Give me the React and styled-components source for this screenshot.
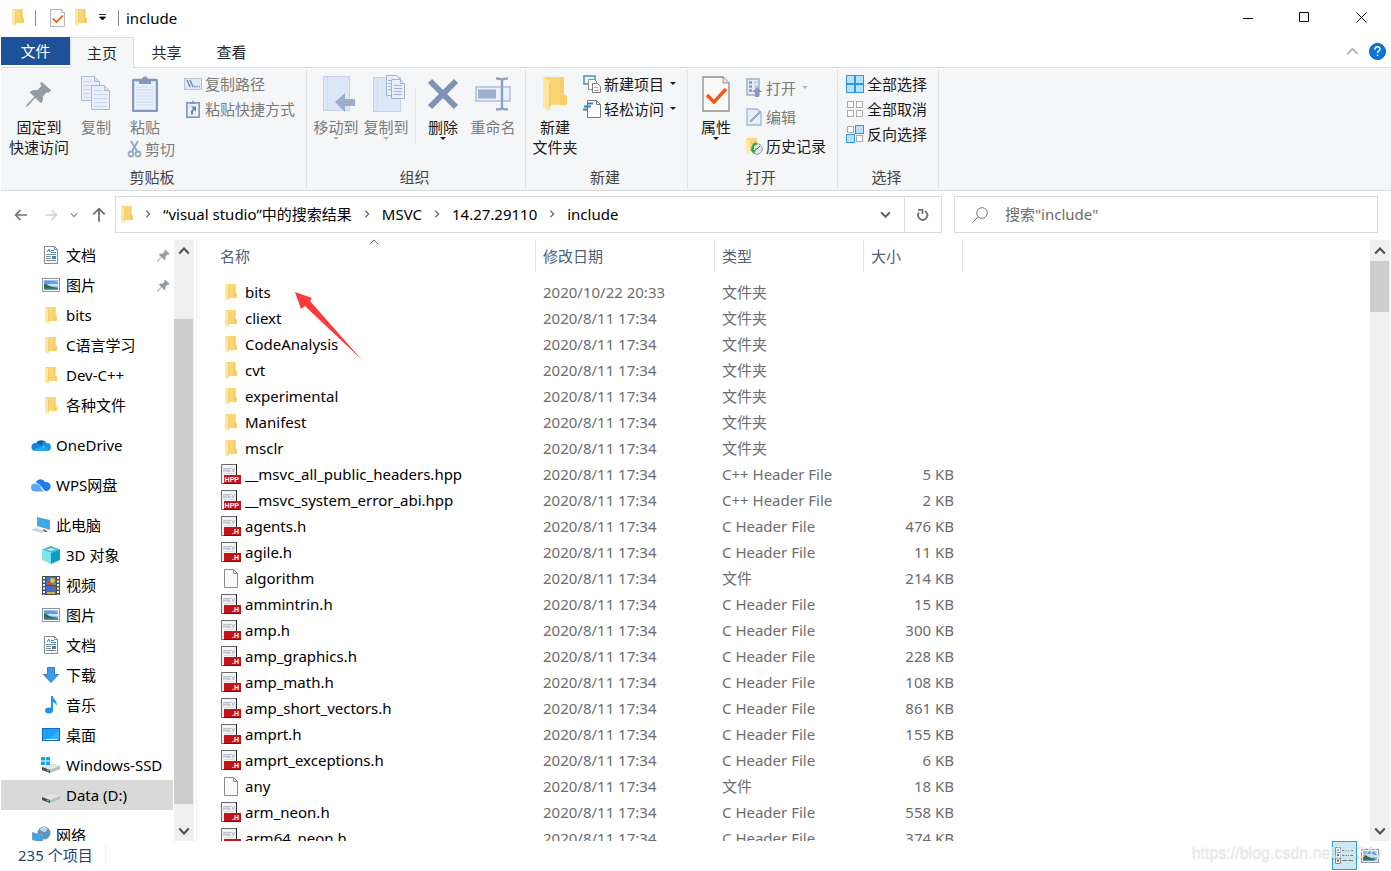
import React from "react";
import styled, { createGlobalStyle } from "styled-components";

const GlobalStyle = createGlobalStyle`
  * {
    box-sizing: border-box;
  }
  body {
    margin: 0;
    background: #fff;
    overflow: hidden;
  }
  body, button, input {
    font-family: "Noto Sans", "Noto Sans CJK SC", sans-serif;
    font-size: 15px;
    line-height: 20px;
    color: #000;
  }
  button {
    padding: 0;
    border: 0;
    background: none;
    white-space: nowrap;
  }
  ul {
    margin: 0;
    padding: 0;
    list-style: none;
  }
  svg {
    display: block;
    flex: none;
  }
`;

const Window = styled.div`
  position: relative;
  display: flex;
  flex-direction: column;
  height: 100vh;
  padding-left: 1px;
`;

const TitleBar = styled.header`
  display: flex;
  align-items: center;
  height: 37px;
  padding: 0 1px 2px 9px;
`;

const QuickAccess = styled.div`
  display: flex;
  align-items: center;
  flex: 1;
`;

const QuickButton = styled.button`
  display: flex;
  align-items: center;
  justify-content: center;
  width: ${props => props.$width}px;
  height: 24px;
`;

const TitleDivider = styled.span`
  width: 1px;
  height: 16px;
  background: #8b8b8b;
`;

const Title = styled.h1`
  margin: 0 0 0 1px;
  font-size: 15px;
  font-weight: 400;
`;

const WindowButton = styled.button`
  display: flex;
  align-items: center;
  justify-content: center;
  width: 57px;
  height: 35px;
`;

const TabBar = styled.nav`
  display: flex;
  height: 31px;
  border-bottom: 1px solid #dadbdc;
`;

const Tab = styled.button`
  width: 65px;
  height: 30px;
  color: #262626;
`;

const FileTab = styled(Tab)`
  width: 69px;
  height: 28px;
  background: #1e5199;
  color: #fff;
`;

const ActiveTab = styled(Tab)`
  height: 31px;
  width: 64px;
  border: 1px solid #dadbdc;
  border-bottom: 0;
  background: #f5f6f7;
`;

const TabTools = styled.div`
  display: flex;
  align-items: center;
  gap: 10px;
  margin-left: auto;
  padding: 0 5px 2px 0;
`;

const Ribbon = styled.section`
  display: flex;
  height: 123px;
  border-bottom: 1px solid #dadbdc;
  background: #f5f6f7;
`;

const Group = styled.div`
  display: flex;
  flex-direction: column;
  width: ${props => props.$width}px;
  margin: 2px 0;
  border-right: 1px solid #e1e2e3;
`;

const GroupBody = styled.div`
  display: flex;
  flex: 1;
  padding-left: ${props => props.$indent || 0}px;
`;

const GroupTitle = styled.div`
  height: 21px;
  padding-right: 3px;
  text-align: center;
  color: #444;
`;

const Stack = styled.div`
  display: flex;
  flex-direction: column;
  padding: ${props => props.$pad || "1px 0 0 0"};
`;

const BigButton = styled.button`
  display: flex;
  flex-direction: column;
  align-items: center;
  width: ${props => props.$width}px;
  color: ${props => (props.disabled ? "#7a7a7a" : "#1a1a1a")};
`;

const BigIcon = styled.span`
  display: flex;
  align-items: center;
  height: 47px;
`;

const SmallButton = styled.button`
  display: flex;
  align-items: center;
  gap: 3px;
  height: ${props => props.$height || 25}px;
  color: ${props => (props.disabled ? "#7a7a7a" : "#1a1a1a")};
`;

const CutButton = styled(SmallButton)`
  height: 20px;
  margin: 2px 0 0 8px;
`;

const Caret = styled.span`
  width: 0;
  height: 0;
  margin-left: ${props => (props.$side ? 3 : 0)}px;
  border: 3px solid transparent;
  border-top-color: ${props => (props.$muted ? "#b5b5b5" : "#1a1a1a")};
  border-bottom: 0;
`;

const InnerDivider = styled.span`
  width: 1px;
  height: 55px;
  margin: 19px 0 0 4px;
  background: #e1e2e3;
`;

const AddressRow = styled.div`
  display: flex;
  align-items: center;
  height: 49px;
  padding: 0 13px 2px 0;
`;

const NavButtons = styled.div`
  display: flex;
  align-items: center;
  width: 114px;
  padding-left: 10px;
`;

const NavButton = styled.button`
  display: flex;
  justify-content: center;
  width: ${props => props.$width}px;

  &:last-child {
    margin-left: auto;
  }
`;

const AddressBox = styled.div`
  display: flex;
  align-items: center;
  flex: 1;
  height: 37px;
  margin-right: 12px;
  padding-left: 5px;
  border: 1px solid #d9d9d9;
`;

const Crumbs = styled.ol`
  display: flex;
  flex: 1;
  margin: 0;
  padding: 0 0 2px;
  list-style: none;
`;

const Crumb = styled.li`
  display: flex;
  align-items: center;
`;

const CrumbArrow = styled.span`
  display: flex;
  justify-content: center;
  width: 30px;
`;

const BoxButton = styled.button`
  display: flex;
  align-items: center;
  justify-content: center;
  width: 37px;
  height: 35px;
  border-left: ${props => (props.$line ? "1px solid #d9d9d9" : "0")};
`;

const SearchBox = styled.label`
  display: flex;
  align-items: center;
  flex: 0 1 424px;
  height: 37px;
  padding-left: 17px;
  gap: 17px;
  border: 1px solid #d9d9d9;
`;

const SearchInput = styled.input`
  flex: 1;
  min-width: 0;
  padding: 0 0 2px;
  border: 0;
  outline: 0;
  background: none;
  &::placeholder {
    color: #6d6d6d;
    opacity: 1;
  }
`;

const Body = styled.div`
  display: flex;
  flex: 1;
  min-height: 0;
  padding-right: 1px;
`;

const Sidebar = styled.ul`
  width: 173px;
  overflow: hidden;
`;

const SideItem = styled.li`
  margin-top: ${props => (props.$gap ? 10 : 0)}px;
`;

const SideLink = styled.button`
  display: flex;
  align-items: center;
  width: 172px;
  height: 30px;
  padding-left: ${props => (props.$root ? 29 : 39)}px;
  padding-right: 3px;
  gap: 4px;
  background: ${props => (props.$selected ? "#d9d9d9" : "none")};
`;

const SideIcon = styled.span`
  display: flex;
  justify-content: center;
  width: 22px;
`;

const SideName = styled.span`
  flex: 1;
  text-align: left;
`;

const ScrollBar = styled.div`
  display: flex;
  flex-direction: column;
  flex: none;
  width: 20px;
  padding-right: 1px;
  background: #f0f0f0;
`;

const ScrollArrow = styled.button`
  display: flex;
  align-items: center;
  justify-content: center;
  height: 21px;
`;

const ScrollTrack = styled.div`
  display: flex;
  flex-direction: column;
  flex: 1;
`;

const Space = styled.div`
  flex: ${props => props.$grow} 1 0;
`;

const Thumb = styled(Space)`
  background: #cdcdcd;
`;

const Content = styled.main`
  flex: 1;
  min-width: 0;
  margin-left: 2px;
  padding-left: 16px;
  border-left: 1px solid #f0f0f0;
  overflow: hidden;
`;

const FileTable = styled.table`
  width: 750px;
  table-layout: fixed;
  border-collapse: separate;
  border-spacing: 0;

  tbody::before {
    display: table-row;
    height: 7px;
    content: "";
  }
`;

const HeadCell = styled.th`
  position: relative;
  width: ${props => props.$width}px;
  height: 32px;
  padding: 0 0 0 7px;
  border-right: 1px solid #e5e5e5;
  font-weight: 400;
  text-align: left;
  color: #4c607a;
`;

const SortMark = styled.span`
  position: absolute;
  top: -3px;
  left: 50%;
  margin-left: -5px;
`;

const Cell = styled.td`
  height: 26px;
  padding: 0 9px 0 7px;
  text-align: ${props => (props.$right ? "right" : "left")};
  white-space: nowrap;
  color: #6d6d6d;
`;

const NameCell = styled(Cell)`
  padding-left: 8px;
  color: #000;
`;

const FileName = styled.span`
  display: flex;
  align-items: center;
  gap: 4px;
`;

const FileIcon = styled.span`
  display: flex;
  justify-content: center;
  width: 20px;
`;

const StatusBar = styled.footer`
  display: flex;
  align-items: flex-start;
  height: 30px;
  padding-right: 9px;
`;

const StatusText = styled.div`
  flex: 1;
  padding: 4px 0 0 17px;
  color: #26456e;
`;

const StatusCount = styled.span`
  padding-right: 12px;
  border-right: 1px solid #f0f0f0;
`;

const ViewButton = styled.button`
  display: flex;
  align-items: center;
  justify-content: center;
  width: 25px;
  height: 29px;
  border: 1px solid ${props => (props.$active ? "#26a0da" : "transparent")};
  background: ${props => (props.$active ? "#cbe8f6" : "none")};
`;

const Watermark = styled.div`
  position: absolute;
  right: 9px;
  bottom: 8px;
  font-family: "Liberation Sans", sans-serif;
  font-size: 16px;
  color: rgba(236, 236, 236, 0.85);
  text-shadow: 0 1px 1px rgba(0, 0, 0, 0.12);
  pointer-events: none;
`;

const Pointer = styled.svg`
  position: absolute;
  top: 291px;
  left: 294px;
  pointer-events: none;
`;

/* icons */

const FolderIcon = ({ width = 12, height = 17 }) => (
  <svg width={width} height={height} viewBox="0 0 24 34" preserveAspectRatio="none">
    <path d="M1 0h20v18l3 1v9H1z" fill="#fbd677" />
    <path d="M17 0h4v18l3 1v9h-7z" fill="#f7cd69" />
    <path d="M0 0l8 5v22l-2 7-6-4z" fill="#ffe79f" />
    <path d="M8 5v22l-2 7V6z" fill="#f4cb66" />
  </svg>
);

const PropertiesIcon = ({ width = 15, height = 18 }) => (
  <svg width={width} height={height} viewBox="0 0 28 36" preserveAspectRatio="none">
    <path d="M1 1h20l6 6v28H1z" fill="#fafafa" stroke="#8f8f8f" strokeWidth="1.3" />
    <path d="M21 1v6h6" fill="#e6e6e6" stroke="#8f8f8f" />
    <path d="M5 19l7 7 12-13" fill="none" stroke="#f1591b" strokeWidth="3.4" />
  </svg>
);

const PinIcon = ({ size = 26 }) => (
  <svg width={size} height={size} viewBox="0 0 28 28" fill="#929ca5">
    <path d="M17 1l10 9-3 3-2-1-4 5c1 3 0 5-2 7l-6-6-8 9-2 1 1-3 8-8-5-5c2-2 5-3 8-2l5-5-2-2z" />
  </svg>
);

const Sheet = ({ x, y }) => (
  <g transform={`translate(${x} ${y})`}>
    <path d="M.5.5h13l5 5v19H.5z" fill="#e9effa" stroke="#a9bbdb" />
    <path d="M13.500.5v5h5" fill="#d3dff2" stroke="#a9bbdb" />
    <path d="M3 5.500h8M3 9.500h13M3 13.500h13M3 17.500h13M3 21.500h13" stroke="#c9d6ec" />
  </g>
);

const CopyIcon = () => (
  <svg width="30" height="35" viewBox="0 0 30 35">
    <Sheet x={0} y={0} />
    <Sheet x={10} y={9} />
  </svg>
);

const PasteIcon = () => (
  <svg width="26" height="36" viewBox="0 0 26 36">
    <rect x="1" y="4" width="24" height="31" rx="1" fill="#e9f0fb" stroke="#8497bd" strokeWidth="2.400" />
    <path d="M7 8V4h3a3 3.500 0 016 0h3v4z" fill="#8497bd" />
    <path d="M4 11h18M4 14h18M4 17h18M4 20h18M4 23h18M4 26h18M4 29h18" stroke="#d1dcee" />
  </svg>
);

const PathIcon = () => (
  <svg width="18" height="12" viewBox="0 0 18 12">
    <rect x=".5" y=".5" width="17" height="11" fill="#dfe8f5" stroke="#b5c4dd" />
    <path d="M3 2l3 7M6 2l3 7" stroke="#7388b3" strokeWidth="1.400" />
    <path d="M10 8.500h1.500M12.500 8.500H14M15 8.500h1" stroke="#7388b3" strokeWidth="1.500" />
  </svg>
);

const ShortcutIcon = () => (
  <svg width="18" height="18" viewBox="0 0 18 18">
    <rect x="2.800" y="2.800" width="12.400" height="14.400" fill="#e9f0fb" stroke="#8497bd" strokeWidth="1.600" />
    <path d="M6 4V2h2a1 1.200 0 012 0h2v2z" fill="#8497bd" />
    <path d="M7 6.500h5v5l-1.500-1.500-1.500 1.500v3H7V11l2-2.500z" fill="#6f86b5" />
  </svg>
);

const CutIcon = () => (
  <svg width="15" height="18" viewBox="0 0 15 18" fill="none" stroke="#97a8c7">
    <path d="M4 1l6 10M11 1L5 11" strokeWidth="2" />
    <circle cx="4" cy="14" r="2.500" strokeWidth="1.800" />
    <circle cx="11" cy="14" r="2.500" strokeWidth="1.800" />
  </svg>
);

const MoveIcon = () => (
  <svg width="37" height="36" viewBox="-5 0 37 36">
    <rect x=".5" y=".5" width="26" height="34" fill="#dbe6f6" stroke="#c3d1e9" />
    <path d="M4.500 1v33" stroke="#cfdbee" />
    <path d="M12 26l10-9v6h10v7H22v6z" fill="#9dadc9" />
  </svg>
);

const CopyToIcon = () => (
  <svg width="38" height="38" viewBox="-6 0 38 38">
    <rect x=".5" y="2.500" width="27" height="34" fill="#dbe6f6" stroke="#c3d1e9" />
    <path d="M4.500 3v33" stroke="#cfdbee" />
    <g fill="#eaf0fa" stroke="#9fb2d2">
      <path d="M13.500.5h10l4 4v16h-14z" />
      <path d="M18.500 4.500h9l4 4v15h-13z" />
      <path d="M27.500 4.500v4h4M21 10.500h8M21 13.500h8M21 16.500h8M21 19.500h8" />
      <path d="M15 5.500h3M15 8.500h3M15 11.500h3M15 14.500h3" />
    </g>
  </svg>
);

const DeleteIcon = () => (
  <svg width="32" height="32" viewBox="0 0 32 32">
    <path d="M3 3l26 26M29 3L3 29" stroke="#8093b5" strokeWidth="6" />
  </svg>
);

const RenameIcon = () => (
  <svg width="36" height="34" viewBox="0 0 36 34">
    <rect x="1" y="10" width="34" height="14" fill="#e9f1fc" stroke="#a9bbd9" strokeWidth="1.400" />
    <rect x="3" y="12.500" width="18" height="9" fill="#9fb1ce" />
    <path d="M21 1.500c4 0 6 0 6 3v25c0 3-2 3-6 3M33 1.500c-4 0-6 0-6 3v25c0 3 2 3 6 3" fill="none" stroke="#8fa2c3" strokeWidth="2.400" />
  </svg>
);

const NewItemIcon = () => (
  <svg width="18" height="18" viewBox="0 0 18 18">
    <rect x="1" y="1" width="11" height="8" fill="#e9f6fb" stroke="#4a9cbb" strokeWidth="1.600" />
    <path d="M5.500 4.500h6l2 2v8h-8z" fill="#fff" stroke="#8f8f8f" />
    <path d="M9.500 8.500h5l3 3v6h-8z" fill="#fff" stroke="#7d7d7d" />
    <path d="M11 12.500h4M11 15.500h5" stroke="#c9a8a8" />
  </svg>
);

const EasyAccessIcon = () => (
  <svg width="18" height="20" viewBox="0 0 18 20">
    <path d="M4.500 1.500h9l4 4v13h-13z" fill="#fdfdfd" stroke="#777" />
    <path d="M13.500 1.500v4h4" fill="none" stroke="#777" />
    <path d="M4 4.500h6M1 7.500h7M0 10.500h4" stroke="#3b7db8" strokeWidth="2" />
  </svg>
);

const OpenIcon = () => (
  <svg width="17" height="20" viewBox="0 0 17 20">
    <rect x="1" y="1" width="12" height="16" fill="#e6edf8" stroke="#a4b3cf" strokeWidth="1.600" />
    <path d="M3 4.500h3M3 8.500h3M3 12.500h3" stroke="#8497bd" strokeWidth="2.400" />
    <path d="M8 4.500h4M8 8.500h4" stroke="#c3cfe4" strokeWidth="2" />
    <path d="M11 9l5 5h-3v5H9v-5H6z" fill="#8497bd" />
  </svg>
);

const EditIcon = () => (
  <svg width="17" height="18" viewBox="0 0 17 18">
    <path d="M1 1h10l4 4v12H1z" fill="#e6eefa" stroke="#a9b8d3" strokeWidth="1.400" />
    <path d="M4 14l2-1 9-9-1-1-9 9z" fill="#9aabca" stroke="#9aabca" />
  </svg>
);

const HistoryIcon = () => (
  <svg width="17" height="18" viewBox="0 0 17 18">
    <path d="M1 1h10v12H1z" fill="#fbd677" />
    <path d="M0 1l4 3v10l-1 3-3-2z" fill="#ffe9a8" />
    <circle cx="11" cy="12" r="5.300" fill="#e4e4e4" stroke="#999" />
    <path d="M11 12l3-3M11 12H9" stroke="#666" />
    <path d="M11 6.500c-4 0-5 4-4 7" fill="none" stroke="#2fae4b" strokeWidth="2.400" />
    <path d="M4 13h6l-2 4z" fill="#2fae4b" />
  </svg>
);

const TILES = [[0, 0], [9, 0], [0, 9], [9, 9]];

const TilesIcon = ({ kind }) => (
  <svg width="18" height="18" viewBox="0 0 18 18">
    {TILES.map(([x, y], index) => {
      const on = kind === "all" || (kind === "invert" && (index === 1 || index === 2));
      return on ? (
        <rect key={index} x={x + 0.5} y={y + 0.5} width="8" height="8" fill="#b5e2fb" stroke="#2f95de" />
      ) : (
        <rect key={index} x={x + 1.5} y={y + 1.5} width="6" height="6" fill="#fdfdfd" stroke="#a9a9a9" />
      );
    })}
  </svg>
);

const Chevron = ({ dir = "down", size = 8, color = "#666", weight = 1.6 }) => {
  const turn = { down: 0, left: 90, up: 180, right: 270 }[dir];
  return (
    <svg width={size} height={size} viewBox="0 0 10 10">
      <path d="M1 3l4 4 4-4" transform={`rotate(${turn} 5 5)`} fill="none" stroke={color} strokeWidth={weight} />
    </svg>
  );
};

const Arrow = ({ turn = 0, color = "#707070", size = 14 }) => (
  <svg width={size} height={size} viewBox="0 0 14 14">
    <path d="M13 7H1.500M6.500 2l-5 5 5 5" transform={`rotate(${turn} 7 7)`} fill="none" stroke={color} strokeWidth="1.600" />
  </svg>
);

const RefreshIcon = () => (
  <svg width="12" height="13" viewBox="0 0 12 13" fill="none" stroke="#6f6f6f">
    <path d="M2 4.500a4.600 4.600 0 107.500 0L8 3" strokeWidth="1.800" />
    <path d="M1 1.800h4.500v4.200" strokeWidth="1.700" />
  </svg>
);

const SearchIcon = () => (
  <svg width="16" height="16" viewBox="0 0 16 16" fill="none" stroke="#777">
    <circle cx="10" cy="6" r="5.300" />
    <path d="M6.200 9.800L.5 15.500" />
  </svg>
);

const DocumentIcon = () => (
  <svg width="16" height="18" viewBox="0 0 16 18">
    <path d="M1.500.5h10l3 3v14h-13z" fill="#fff" stroke="#858b8f" />
    <path d="M11.500.5v3h3" fill="none" stroke="#858b8f" />
    <path d="M4 6l2-3 1 3M8 4.500h3M8 6.500h5" stroke="#2a8ad4" fill="none" />
    <path d="M3 8.500h10M3 10.500h5M3 12.500h5M3 14.500h10" stroke="#7c8c9a" />
    <rect x="9" y="10" width="4" height="3" fill="#3f87b5" />
  </svg>
);

const PictureIcon = () => (
  <svg width="18" height="14" viewBox="0 0 18 14">
    <rect x=".5" y=".5" width="17" height="13" fill="#fff" stroke="#939393" />
    <rect x="2" y="2" width="14" height="10" fill="#8cbdf0" />
    <path d="M2 3h9l5 2v2H2z" fill="#5c9ce6" />
    <path d="M4 7c4-2 8-1 12-1v2H4z" fill="#cfe6f8" />
    <path d="M2 6c3 0 5 2 8 3l6 1v1H2z" fill="#2d6a58" />
    <path d="M2 10.500h14V12H2z" fill="#548fb2" />
  </svg>
);

const OneDriveIcon = () => (
  <svg width="20" height="14" viewBox="0 0 20 14">
    <path d="M5 5a6 5 0 0110-1l-4 5-7-2z" fill="#0c62b5" />
    <path d="M4 13a4 4 0 011-8c3 0 5 2 7 4l-6 4z" fill="#1386d9" />
    <path d="M11 6c1-2 3-2 5-1a4 4 0 010 8z" fill="#1e94e5" />
    <path d="M2 12l9-4 7 4c-1 1-2 1-3 1H4z" fill="#2aa7ea" />
  </svg>
);

const WpsCloudIcon = () => (
  <svg width="20" height="14" viewBox="0 0 20 14">
    <path d="M5 4a5 5 0 019 0 4 4 0 012 9h-2L6 6z" fill="#1e7bf5" />
    <path d="M4 13.500a4 4 0 010-8c5 0 6 8 10 8z" fill="#5da6fb" />
    <path d="M5 5.500c5 0 6 6 9 8" fill="none" stroke="#fff" strokeWidth=".8" />
  </svg>
);

const ComputerIcon = () => (
  <svg width="20" height="18" viewBox="0 0 20 18">
    <path d="M6 1l13 3v10L6 10z" fill="#7d98ae" />
    <path d="M7 2.300l11 2.500v7.700L7 9.200z" fill="#39a9f0" />
    <path d="M0 14l5-2 10 3-4 2z" fill="#cfd5da" />
    <path d="M12 13l3 1 2 2h-4z" fill="#6b7781" />
  </svg>
);

const CubeIcon = () => (
  <svg width="20" height="18" viewBox="0 0 20 18">
    <path d="M10 0l9 3.500L10 7 1 3.500z" fill="#3fb6cb" />
    <path d="M1 3.500L10 7v11l-9-4z" fill="#7fe3ec" />
    <path d="M19 3.500L10 7v11l9-4z" fill="#0b9fc7" />
    <path d="M10 2l5 1.500L10 5 5 3.500z" fill="#b7eff4" />
  </svg>
);

const VideoIcon = () => (
  <svg width="18" height="19" viewBox="0 0 18 19">
    <rect width="18" height="19" fill="#4b4b4b" />
    <path d="M2 1v18M16 1v18" stroke="#fff" strokeWidth="2" strokeDasharray="2 1.500" />
    <path d="M4 1h10v8H4zM4 10h10v8H4z" fill="#3a6fd8" />
    <path d="M5 6h4v3H5zM11 10l2 2-2 2-2-2z" fill="#d9482d" />
    <circle cx="10.500" cy="4.500" r="2.400" fill="#e5c92f" />
    <path d="M5 16h8v2H5z" fill="#c7b93b" />
    <path d="M10 7h4v2h-4z" fill="#56a34a" />
  </svg>
);

const DownloadIcon = () => (
  <svg width="18" height="18" viewBox="0 0 18 18">
    <path d="M5.500 1.500h7v7h4L9 16.500 1.500 8.500h4z" fill="#3d9be9" stroke="#2f7fc6" />
  </svg>
);

const MusicIcon = () => (
  <svg width="14" height="18" viewBox="0 0 14 18" fill="#1b95f0">
    <ellipse cx="5" cy="14.500" rx="4" ry="3" />
    <path d="M7 0h2c0 4 5 4 3.500 10C12 7 10 6.500 9 6v9H7z" />
  </svg>
);

const DesktopIcon = () => (
  <svg width="18" height="14" viewBox="0 0 18 14">
    <rect x=".5" y=".5" width="17" height="12" fill="#1ba1fb" stroke="#0b6fbd" />
    <path d="M6 12L17 2v10z" fill="#3cb0ff" />
    <path d="M2 11.500h14" stroke="#e9f5ff" strokeDasharray="1 1 11 1" />
  </svg>
);

const DriveIcon = ({ system }) => (
  <svg width="20" height="18" viewBox="0 0 20 18">
    <path d="M1 11l11-3.500L19 10v3L9 17l-8-3z" fill="#b9bcbf" />
    <path d="M1 11l11-3.500L19 10l-10 4z" fill="#e2e4e5" />
    <path d="M1 11l8 3v3l-8-3z" fill="#4b4f50" />
    <path d="M6 14.500h2" stroke="#5fdc6a" strokeWidth="1.500" />
    {system && <path d="M0 1h4v3.500H0zM5 1h4v3.500H5zM0 5.500h4V9H0zM5 5.500h4V9H5z" fill="#12a4e6" />}
  </svg>
);

const NetworkIcon = () => (
  <svg width="20" height="18" viewBox="0 0 20 18">
    <circle cx="13" cy="7" r="6.500" fill="#5f94b8" />
    <path d="M9 3c3-3 6-2 8 0-2 1-2 4-4 3s-3-1-4-3z" fill="#b9dcec" />
    <path d="M1 6l11 3v8L1 14z" fill="#7c9cb5" />
    <path d="M2 7.300l9 2.500v5.900L2 13.200z" fill="#35a8f0" />
  </svg>
);

const HeaderIcon = ({ label }) => (
  <svg width="20" height="21" viewBox="0 0 20 21">
    <path d="M.5.5h15v19H.5z" fill="#f4f4f4" stroke="#6a6a6a" />
    <path d="M15.500 0v11" stroke="#222" />
    <text x="2" y="7.500" fontFamily="Liberation Sans, sans-serif" fontSize="6" fontWeight="700" fill="#b3b3b3">
      REV
    </text>
    <path d="M3 9.500h10" stroke="#dadada" />
    <rect x="3" y="11" width="17" height="8" fill="#c4141a" />
    <path d="M3 19.500h17" stroke="#701010" />
    <text x="18" y="18" textAnchor="end" fontFamily="Liberation Sans, sans-serif" fontSize="7" fontWeight="700" fill="#fff">
      {label}
    </text>
  </svg>
);

const BlankFileIcon = () => (
  <svg width="16" height="19" viewBox="0 0 16 19">
    <path d="M1.500.5h9l4 4v14h-13z" fill="#fafafa" stroke="#8a8a8a" />
    <path d="M10.500.5v4h4" fill="none" stroke="#8a8a8a" />
  </svg>
);

const DetailsViewIcon = () => (
  <svg width="19" height="17" viewBox="0 0 19 17">
    <path d="M.5.5h5v16h-5zM.5 5.500h5M.5 11h5" fill="#fff" stroke="#8c8c8c" />
    <path d="M2 3h2M2 8h2" stroke="#3c79b4" strokeWidth="2" />
    <path d="M2 13.500h2" stroke="#c8362c" strokeWidth="2" />
    <path d="M7 3.500h5M13 3.500h5M7 8.500h5M13 8.500h5M7 13.500h5M13 13.500h5" stroke="#777" />
  </svg>
);

const fileIcons = {
  folder: <FolderIcon />,
  hpp: <HeaderIcon label="HPP" />,
  h: <HeaderIcon label=".H" />,
  file: <BlankFileIcon />
};

const typeNames = {
  folder: "文件夹",
  hpp: "C++ Header File",
  h: "C Header File",
  file: "文件"
};

const sideItems = [
  { name: "文档", icon: <DocumentIcon />, pinned: true },
  { name: "图片", icon: <PictureIcon />, pinned: true },
  { name: "bits", icon: <FolderIcon /> },
  { name: "C语言学习", icon: <FolderIcon /> },
  { name: "Dev-C++", icon: <FolderIcon /> },
  { name: "各种文件", icon: <FolderIcon /> },
  { name: "OneDrive", icon: <OneDriveIcon />, root: true },
  { name: "WPS网盘", icon: <WpsCloudIcon />, root: true },
  { name: "此电脑", icon: <ComputerIcon />, root: true },
  { name: "3D 对象", icon: <CubeIcon /> },
  { name: "视频", icon: <VideoIcon /> },
  { name: "图片", icon: <PictureIcon /> },
  { name: "文档", icon: <DocumentIcon /> },
  { name: "下载", icon: <DownloadIcon /> },
  { name: "音乐", icon: <MusicIcon /> },
  { name: "桌面", icon: <DesktopIcon /> },
  { name: "Windows-SSD", icon: <DriveIcon system /> },
  { name: "Data (D:)", icon: <DriveIcon />, selected: true },
  { name: "网络", icon: <NetworkIcon />, root: true }
];

const files = [
  { name: "bits", kind: "folder", date: "2020/10/22 20:33" },
  { name: "cliext", kind: "folder" },
  { name: "CodeAnalysis", kind: "folder" },
  { name: "cvt", kind: "folder" },
  { name: "experimental", kind: "folder" },
  { name: "Manifest", kind: "folder" },
  { name: "msclr", kind: "folder" },
  { name: "__msvc_all_public_headers.hpp", kind: "hpp", size: 5 },
  { name: "__msvc_system_error_abi.hpp", kind: "hpp", size: 2 },
  { name: "agents.h", kind: "h", size: 476 },
  { name: "agile.h", kind: "h", size: 11 },
  { name: "algorithm", kind: "file", size: 214 },
  { name: "ammintrin.h", kind: "h", size: 15 },
  { name: "amp.h", kind: "h", size: 300 },
  { name: "amp_graphics.h", kind: "h", size: 228 },
  { name: "amp_math.h", kind: "h", size: 108 },
  { name: "amp_short_vectors.h", kind: "h", size: 861 },
  { name: "amprt.h", kind: "h", size: 155 },
  { name: "amprt_exceptions.h", kind: "h", size: 6 },
  { name: "any", kind: "file", size: 18 },
  { name: "arm_neon.h", kind: "h", size: 558 },
  { name: "arm64_neon.h", kind: "h", size: 374 }
];

const crumbs = ["“visual studio”中的搜索结果", "MSVC", "14.27.29110", "include"];

const RibbonButton = ({ icon, lines, width, disabled, menu }) => (
  <BigButton $width={width} disabled={disabled}>
    <BigIcon>{icon}</BigIcon>
    {lines.map(line => (
      <span key={line}>{line}</span>
    ))}
    {menu && <Caret $muted={disabled} />}
  </BigButton>
);

const RibbonItem = ({ icon, label, height, disabled, menu }) => (
  <SmallButton $height={height} disabled={disabled}>
    {icon}
    {label}
    {menu && <Caret $side $muted={disabled} />}
  </SmallButton>
);

const Scroll = ({ before, size, after }) => (
  <ScrollBar>
    <ScrollArrow aria-label="向上滚动">
      <Chevron dir="up" size={12} color="#505050" weight={1.8} />
    </ScrollArrow>
    <ScrollTrack>
      <Space $grow={before} />
      <Thumb $grow={size} />
      <Space $grow={after} />
    </ScrollTrack>
    <ScrollArrow aria-label="向下滚动">
      <Chevron size={12} color="#505050" weight={1.8} />
    </ScrollArrow>
  </ScrollBar>
);

const RibbonPanel = () => (
  <Ribbon>
    <Group $width={306}>
      <GroupBody $indent={4}>
        <RibbonButton icon={<PinIcon />} lines={["固定到", "快速访问"]} width={68} />
        <RibbonButton icon={<CopyIcon />} lines={["复制"]} width={46} disabled />
        <Stack $pad="0 5px 0 0">
          <RibbonButton icon={<PasteIcon />} lines={["粘贴"]} width={52} disabled />
          <CutButton disabled>
            <CutIcon />
            剪切
          </CutButton>
        </Stack>
        <Stack $pad="1px 0 0 4px">
          <RibbonItem icon={<PathIcon />} label="复制路径" disabled />
          <RibbonItem icon={<ShortcutIcon />} label="粘贴快捷方式" disabled />
        </Stack>
      </GroupBody>
      <GroupTitle>剪贴板</GroupTitle>
    </Group>
    <Group $width={219}>
      <GroupBody $indent={4}>
        <RibbonButton icon={<MoveIcon />} lines={["移动到"]} width={50} disabled menu />
        <RibbonButton icon={<CopyToIcon />} lines={["复制到"]} width={50} disabled menu />
        <InnerDivider />
        <RibbonButton icon={<DeleteIcon />} lines={["删除"]} width={54} menu />
        <RibbonButton icon={<RenameIcon />} lines={["重命名"]} width={46} disabled />
      </GroupBody>
      <GroupTitle>组织</GroupTitle>
    </Group>
    <Group $width={162}>
      <GroupBody $indent={1}>
        <RibbonButton icon={<FolderIcon width={24} height={34} />} lines={["新建", "文件夹"]} width={56} />
        <Stack>
          <RibbonItem icon={<NewItemIcon />} label="新建项目" menu />
          <RibbonItem icon={<EasyAccessIcon />} label="轻松访问" menu />
        </Stack>
      </GroupBody>
      <GroupTitle>新建</GroupTitle>
    </Group>
    <Group $width={150}>
      <GroupBody>
        <RibbonButton icon={<PropertiesIcon width={28} height={36} />} lines={["属性"]} width={56} menu />
        <Stack $pad="3px 0 0 2px">
          <RibbonItem icon={<OpenIcon />} label="打开" height={29} disabled menu />
          <RibbonItem icon={<EditIcon />} label="编辑" height={29} disabled />
          <RibbonItem icon={<HistoryIcon />} label="历史记录" height={29} />
        </Stack>
      </GroupBody>
      <GroupTitle>打开</GroupTitle>
    </Group>
    <Group $width={101}>
      <GroupBody $indent={8}>
        <Stack>
          <RibbonItem icon={<TilesIcon kind="all" />} label="全部选择" />
          <RibbonItem icon={<TilesIcon kind="none" />} label="全部取消" />
          <RibbonItem icon={<TilesIcon kind="invert" />} label="反向选择" />
        </Stack>
      </GroupBody>
      <GroupTitle>选择</GroupTitle>
    </Group>
  </Ribbon>
);

const App = () => (
  <Window>
    <GlobalStyle />
    <TitleBar>
      <QuickAccess>
        <QuickButton $width={16} aria-label="系统菜单">
          <FolderIcon />
        </QuickButton>
        <QuickButton as="span" $width={19}>
          <TitleDivider />
        </QuickButton>
        <QuickButton $width={24} aria-label="属性">
          <PropertiesIcon />
        </QuickButton>
        <QuickButton $width={24} aria-label="新建文件夹">
          <FolderIcon />
        </QuickButton>
        <QuickButton $width={18} aria-label="自定义快速访问工具栏">
          <svg width="7" height="7" viewBox="0 0 7 7">
            <path d="M0 .5h7M.5 3h6l-3 3z" stroke="#000" strokeWidth=".8" />
          </svg>
        </QuickButton>
        <QuickButton as="span" $width={14}>
          <TitleDivider />
        </QuickButton>
        <Title>include</Title>
      </QuickAccess>
      <WindowButton aria-label="最小化">
        <svg width="10" height="10" viewBox="0 0 10 10">
          <path d="M0 5.500h10" stroke="#000" />
        </svg>
      </WindowButton>
      <WindowButton aria-label="最大化">
        <svg width="11" height="11" viewBox="0 0 11 11">
          <path d="M.5.5h9v9h-9z" fill="none" stroke="#000" />
        </svg>
      </WindowButton>
      <WindowButton aria-label="关闭">
        <svg width="11" height="11" viewBox="0 0 11 11">
          <path d="M.5.5l10 10M10.500.5l-10 10" stroke="#000" />
        </svg>
      </WindowButton>
    </TitleBar>
    <TabBar>
      <FileTab>文件</FileTab>
      <ActiveTab>主页</ActiveTab>
      <Tab>共享</Tab>
      <Tab>查看</Tab>
      <TabTools>
        <button aria-label="最小化功能区">
          <Chevron dir="up" size={13} color="#b3b3b3" weight={1.5} />
        </button>
        <button aria-label="帮助">
          <svg width="17" height="17" viewBox="0 0 17 17">
            <circle cx="8.500" cy="8.500" r="8" fill="#0b78d7" stroke="#0a5fae" />
            <path d="M6 6.500c0-3.500 5-3.500 5-.5 0 2-2.500 2-2.500 4" fill="none" stroke="#fff" strokeWidth="1.500" />
            <path d="M7.700 11.500h1.600V13H7.700z" fill="#fff" />
          </svg>
        </button>
      </TabTools>
    </TabBar>
    <RibbonPanel />
    <AddressRow>
      <NavButtons>
        <NavButton $width={20} aria-label="后退">
          <Arrow />
        </NavButton>
        <NavButton $width={40} aria-label="前进">
          <Arrow turn={180} color="#d5d5d5" />
        </NavButton>
        <NavButton $width={6} aria-label="最近浏览的位置">
          <Chevron size={8} color="#888" />
        </NavButton>
        <NavButton $width={32} aria-label="向上">
          <Arrow turn={90} size={16} />
        </NavButton>
      </NavButtons>
      <AddressBox>
        <FolderIcon />
        <Crumbs>
          {crumbs.map(crumb => (
            <Crumb key={crumb}>
              <CrumbArrow>
                <Chevron dir="right" size={8} />
              </CrumbArrow>
              <button>{crumb}</button>
            </Crumb>
          ))}
        </Crumbs>
        <BoxButton aria-label="历史位置">
          <Chevron size={11} weight={1.9} />
        </BoxButton>
        <BoxButton $line aria-label="刷新">
          <RefreshIcon />
        </BoxButton>
      </AddressBox>
      <SearchBox>
        <SearchIcon />
        <SearchInput aria-label="搜索" placeholder={'搜索"include"'} />
      </SearchBox>
    </AddressRow>
    <Body>
      <Sidebar>
        {sideItems.map((item, index) => (
          <SideItem key={index} $gap={item.root}>
            <SideLink $root={item.root} $selected={item.selected}>
              <SideIcon>{item.icon}</SideIcon>
              <SideName>{item.name}</SideName>
              {item.pinned && <PinIcon size={13} />}
            </SideLink>
          </SideItem>
        ))}
      </Sidebar>
      <Scroll before={58} size={485} after={16} />
      <Content>
        <FileTable>
          <thead>
            <tr>
              <HeadCell $width={323}>
                名称
                <SortMark>
                  <Chevron dir="up" size={10} weight={1} />
                </SortMark>
              </HeadCell>
              <HeadCell $width={179}>修改日期</HeadCell>
              <HeadCell $width={149}>类型</HeadCell>
              <HeadCell $width={99}>大小</HeadCell>
            </tr>
          </thead>
          <tbody>
            {files.map(({ name, kind, date = "2020/8/11 17:34", size }) => (
              <tr key={name}>
                <NameCell>
                  <FileName>
                    <FileIcon>{fileIcons[kind]}</FileIcon>
                    {name}
                  </FileName>
                </NameCell>
                <Cell>{date}</Cell>
                <Cell>{typeNames[kind]}</Cell>
                <Cell $right>{size && `${size} KB`}</Cell>
              </tr>
            ))}
          </tbody>
        </FileTable>
      </Content>
      <Scroll before={0} size={51} after={508} />
    </Body>
    <StatusBar>
      <StatusText>
        <StatusCount>235 个项目</StatusCount>
      </StatusText>
      <ViewButton $active aria-label="详细信息">
        <DetailsViewIcon />
      </ViewButton>
      <ViewButton aria-label="大图标">
        <PictureIcon />
      </ViewButton>
    </StatusBar>
    <Pointer width="69" height="70" viewBox="0 0 69 70">
      <path d="M1 1l17 6-2 3 52 59L11 15l-4 3z" fill="#fb3b38" />
    </Pointer>
    <Watermark>https://blog.csdn.net/im34y</Watermark>
  </Window>
);

export default App;
